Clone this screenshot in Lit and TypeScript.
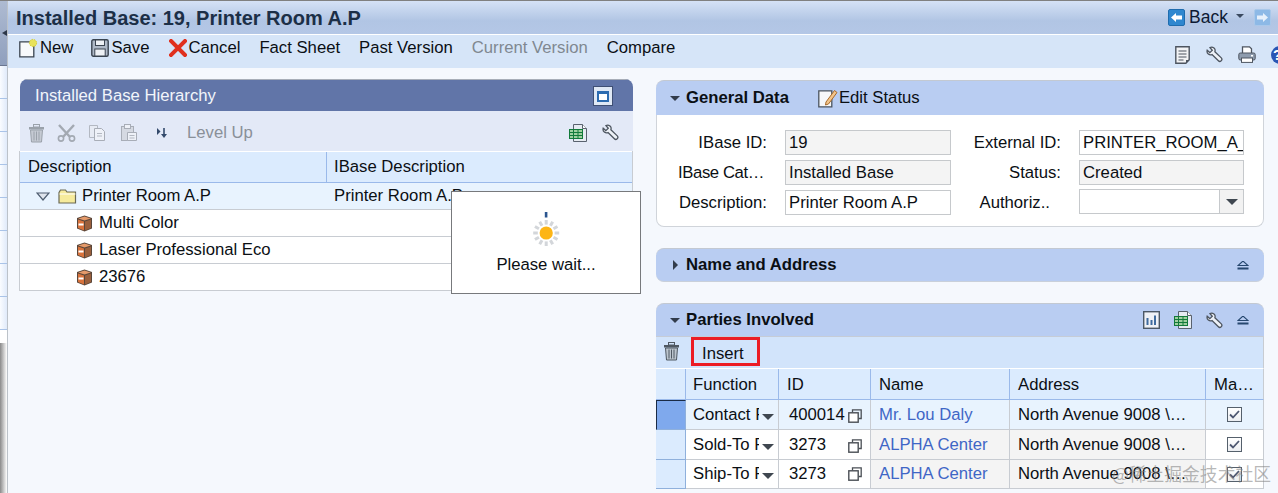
import { LitElement, html, css, svg } from "lit";
import { customElement } from "lit/decorators.js";

const ic = (w: number, h: number, body: unknown, cls = "") =>
  html`<svg class="ic ${cls}" width=${w} height=${h} viewBox="0 0 ${w} ${h}">${body}</svg>`;

const trash = (c = "#4f5862", f = "#bcc5ce") => ic(17, 19, svg`
  <rect x="5.5" y="0.5" width="6" height="2.5" fill="none" stroke=${c}/>
  <rect x="1" y="3" width="15" height="2.5" fill=${c}/>
  <path d="M2.5 6h12l-1 12h-10z" fill=${f} stroke=${c}/>
  <path d="M6 7.5v9M8.5 7.5v9M11 7.5v9" stroke=${c}/>`);
const scissors = () => ic(19, 18, svg`
  <path d="M2 1l11 12M17 1L6 13" stroke="#a3a9b2" stroke-width="2.4" fill="none"/>
  <circle cx="4" cy="14.5" r="2.6" fill="none" stroke="#a3a9b2" stroke-width="1.6"/>
  <circle cx="15" cy="14.5" r="2.6" fill="none" stroke="#a3a9b2" stroke-width="1.6"/>`);
const paste = () => ic(18, 18, svg`
  <rect x="1.5" y="2.5" width="12" height="14" fill="#d5d9e2" stroke="#a8adb7"/>
  <rect x="4.5" y="0.5" width="6" height="4" fill="#eef1f8" stroke="#a8adb7"/>
  <path d="M7.5 8.5h9v8h-9z" fill="#eef1f8" stroke="#a8adb7"/>
  <path d="M9.5 11.5h5M9.5 14h5" stroke="#b3b8c2"/>`);
const level = () => ic(12, 12, svg`
  <path d="M1 1l3.5 3.5L1 8z" fill="#33496b"/>
  <path d="M8 1v7" stroke="#33496b" stroke-width="1.6"/>
  <path d="M5 7h6l-3 4z" fill="#33496b"/>`);
const excel = () => ic(18, 18, svg`
  <path d="M4.5 0.5h9l4 4v13h-13z" fill="#e6ebf2" stroke="#59626f"/>
  <path d="M13.5 0.5v4h4" fill="#fff" stroke="#59626f"/>
  <rect x="0.5" y="5.5" width="13" height="9" fill="#9fcf9f" stroke="#127a3a"/>
  <path d="M0.5 8.5h13M0.5 11.5h13M4.5 5.5v9M9 5.5v9" stroke="#127a3a"/>`);
const wrench = () => ic(17, 17, svg`
  <path d="M1.2 4.2 3.8 6.6 6.3 4.2 4 1.6C5.8.6 8 1.2 8.8 3.1c.4 1 .4 1.8.1 2.7l6.4 6.1c.9 1 .6 2.2-.1 2.9-.8.7-2 .8-2.8-.1L6 8.6C3.5 9.4 .3 7.6 1.2 4.2z" fill="#eef2f8" stroke="#4d5560" stroke-width="1.3"/>`);
const note = () => ic(15, 18, svg`
  <path d="M.8.8h13.4v13l-3.4 3.4H.8z" fill="#f2f3f5" stroke="#4d5560" stroke-width="1.4"/>
  <path d="M3.5 5h8M3.5 8h8M3.5 11h8M3.5 14h5" stroke="#4d5560" stroke-width="1.2"/>
  <path d="M14.5 14l-3.5 3.5V14z" fill="#4d5560"/>`);
const printer = () => ic(18, 17, svg`
  <path d="M4.5.8h7l2 2v5h-9z" fill="#fff" stroke="#4d5560" stroke-width="1.3"/>
  <rect x=".8" y="7" width="16.4" height="7" rx="1.5" fill="#8e9cae" stroke="#4d5560"/>
  <rect x="3.5" y="12" width="11" height="4.4" fill="#fff" stroke="#4d5560"/>
  <rect x="13" y="9" width="2" height="1.5" fill="#fff"/>`);
const chart = () => ic(17, 18, svg`
  <rect x=".7" y=".7" width="15.6" height="16.6" fill="#eef1f6" stroke="#4b5866" stroke-width="1.4"/>
  <path d="M4.5 7v7M8.5 9v5M12 4.5v9.5" stroke="#3f6b9e" stroke-width="2"/>`);
const collapse = () => ic(12, 9, svg`
  <path d="M6 0 11 4.5H1z" fill="none" stroke="#26476f" stroke-width="1.1"/>
  <rect x="0.5" y="6.5" width="11" height="2" fill="#26476f"/>`);
const cube = () => ic(17, 17, svg`
  <path d="M8.5 .5 16 3v10.5L8.5 16.5 1 13.5V3z" fill="#59463a"/>
  <path d="M8.5 1.6 14.8 3.5 8.5 5.6 2.2 3.5z" fill="#e59a6a"/>
  <path d="M2 4.6 8 6.6v8.8l-6-2.4z" fill="#d9733c"/>
  <path d="M9 6.6 15 4.6v8.4l-6 2.4z" fill="#9a5f3c"/>
  <rect x="2.5" y="8.5" width="5" height="2" fill="#fff"/>`);
const stack = () => ic(14, 14, svg`
  <path d="M4.5 3.5V.8h8.7v8.7h-2.7" fill="none" stroke="#4a4f55" stroke-width="1.3"/>
  <rect x=".8" y="3.8" width="9.4" height="9.4" fill="#fff" stroke="#4a4f55" stroke-width="1.4"/>`);

const parties = [
  { fn: "Contact P", id: "400014", name: "Mr. Lou Daly", sel: true },
  { fn: "Sold-To P", id: "3273", name: "ALPHA Center", sel: false },
  { fn: "Ship-To P", id: "3273", name: "ALPHA Center", sel: false },
];
const sideTabs = Array.from({ length: 8 });

@customElement("app-root")
export class AppRoot extends LitElement {
  static styles = css`
    :host { display: block; position: relative; width: 1278px; height: 493px; overflow: hidden;
      font: 16.7px/1.2 "Liberation Sans", Arial, sans-serif; color: #0b0f14; background: #f5f8fd; }
    * { box-sizing: border-box; }
    .ic { display: block; flex: none; }
    .shell { display: grid; grid-template-columns: 8px 1fr; height: 493px; border-top: 1px solid #808080; }
    .side { border-right: 1px solid #bcc2c9; background: #fff; display: flex; flex-direction: column; min-height: 0; overflow: hidden; }
    .side-top { height: 65px; flex: none; background: linear-gradient(#aebbd2, #8f9fbd); border-bottom: 1px solid #6a7690; display: flex; align-items: center; justify-content: flex-end; }
    .side-top i { display:block; width:0; height:0; border:3px solid transparent; border-right:5px solid #2d3748; }
    .side-tab { height: 33px; flex: none; background: linear-gradient(90deg, #fafcff, #e0eafa); border-bottom: 1px solid #a9c3e8; }
    .side-gap { height: 13px; flex: none; }
    .side-shadow { flex: 1; background: linear-gradient(90deg, #8a8a8a, #dddddd 70%, #fff); }
    .main { display: flex; flex-direction: column; min-width: 0; }
    .title { height: 33px; flex: none; display: flex; align-items: center; padding: 0 7px 0 8px;
      background: linear-gradient(#d5e2f6, #b1c5e4 60%, #b4c7e6); }
    .title h1 { margin: 0; font-size: 20px; font-weight: 700; color: #1c2f47; flex: 1; white-space: nowrap; }
    .back { display: flex; align-items: center; gap: 4px; font-size: 17.5px; color: #0d1a33; }
    .navbtn { width: 17px; height: 17px; border-radius: 2px; background: #2f87cf; border: 1px solid #1f6cae; display: flex; align-items: center; justify-content: center; }
    .navbtn.off { background: #8db9e6; border-color: #a9c8ea; }
    .tri { width: 0; height: 0; border: 4px solid transparent; border-top: 4px solid #3a4a60; border-bottom: 0; margin: 0 6px 3px 4px; }
    .tools { height: 34px; flex: none; border-top: 1px solid #fff; background: #d6e5f8; display: flex; align-items: center; padding: 0 0 7px 11px; white-space: nowrap; }
    .tools .b { display: flex; align-items: center; gap: 1px; }
    .tools .b.t { margin-left: 19px; }
    .tools .off { color: #808890; }
    .tools .right { margin-left: auto; display: flex; align-items: center; gap: 15px; padding-top: 13px; margin-right: -7px; height: 0; }
    .tools .right .ic:first-child { margin-right: 1px; }
    .help { width: 14px; height: 18px; border-radius: 9px 0 0 9px; background: #2a56b4; color: #fff; font-weight: 700; font-size: 14px; line-height: 18px; padding-left: 2px; overflow: hidden; }
    .content { flex: 1; display: grid; grid-template-columns: 613px 608px; column-gap: 23px; padding: 11px 0 0 12px; align-items: start; min-height: 0; }
    .pane-l { border-radius: 8px 8px 0 0; overflow: hidden; }
    .pane-h { height: 32px; background: #6175a8; color: #f2f5fb; display: flex; align-items: center; justify-content: space-between; padding: 1px 20px 0 15px; border-top: 1px solid #a8aeb8; }
    .maxi { width: 20px; height: 20px; background: #dfe8f5; border: 2px solid #dfe8f5; outline: 1px solid #3f4f74; outline-offset: -1px; padding: 3px 2px 2px; margin-top: -1px; }
    .maxi b { display: block; height: 100%; background: #fff; border: 2px solid #2c6bb0; border-top-width: 3px; }
    .pane-t { height: 40px; background: #e3e9f7; display: flex; align-items: center; padding: 4px 0 0 8px; color: #8a9099; }
    .pane-t .ic { margin-right: 12px; }
    .pane-t .ic.wide { margin-right: 14px; }
    .pane-t .lvl { margin-left: 6px; margin-right: 4px; }
    .pane-t .lu { margin-left: 3px; }
    .pane-t .end { margin-left: auto; display: flex; gap: 9px; padding-right: 8px; }
    .pane-t .end .ic { margin: 0 6px 0 0; }
    .tree { border: 1px solid #c8ccd2; border-top: 0; background: #fff; margin-left: -1px; }
    .th { display: grid; grid-template-columns: 307px 1fr; height: 32px; background: #dbebfe; border-top: 1px solid #fff; border-bottom: 1px solid #9ab9ea; align-items: stretch; }
    .th > div { display: flex; align-items: center; padding-left: 7px; }
    .th > div:first-child { border-right: 1px solid #9ab9ea; padding-left: 8px; }
    .tr { display: grid; grid-template-columns: 307px 1fr; height: 27px; border-bottom: 1px solid #c8ccd2; align-items: center; }
    .tr:last-child { border-bottom: 0; height: 26px; }
    .tr.root { background: #e8f3fe; padding-top: 1px; }
    .tr .c { display: flex; align-items: center; gap: 6px; padding-left: 56px; }
    .tr.root .c { padding-left: 16px; gap: 5px; }
    .tr.root .c .ic:first-child { margin-right: 3px; }
    .tr .d { padding-left: 7px; white-space: nowrap; }
    .right-col { display: flex; flex-direction: column; padding-top: 1px; }
    .sec-h { height: 35px; background: #b9cdf2; border-top: 1px solid #c3c9d2; border-radius: 8px 8px 0 0; display: flex; align-items: center; padding: 0 15px 0 14px; font-weight: 700; }
    .sec-h.closed { border-radius: 8px; border-bottom: 1px solid #c9d0da; height: 34px; margin-top: 21px; }
    .sec-h .grow { flex: 1; }
    .caret { width: 0; height: 0; border: 5px solid transparent; border-top: 5px solid #323c4c; border-bottom: 0; margin-right: 6px; }
    .caret-r { width: 0; height: 0; border: 5px solid transparent; border-left: 5px solid #323c4c; border-right: 0; margin: 0 8px 0 3px; }
    .edit { display: flex; align-items: center; gap: 1px; font-weight: 400; margin-left: 29px; }
    .body { height: 112px; background: #fff; border: 1px solid #d0d4da; border-top: 0; border-radius: 0 0 8px 8px; display: grid; grid-template-columns: 128px 166px 128px 165px; grid-auto-rows: 30px; padding-top: 15px; white-space: nowrap; }
    .lab { text-align: right; padding-right: 18px; height: 25px; line-height: 25px; }
    .lab.t1 { padding-right: 21px; letter-spacing: -.4px; }
    .lab.t2 { padding-right: 29px; }
    .inp { height: 25px; border: 1px solid #c6c9cc; padding: 0 3px; line-height: 24px; background: #fff; overflow: hidden; }
    .inp.ro { background: #f4f4f4; }
    .combo { display: flex; justify-content: flex-end; margin-top: -1px; padding: 0; }
    .combo span { width: 24px; background: #f2f2f2; border-left: 1px solid #c6c9cc; display: flex; align-items: center; justify-content: center; }
    .combo span::after { content: ""; border: 6px solid transparent; border-top: 6px solid #3f4750; border-bottom: 0; }
    .sec-h.p { margin-top: 21px; height: 34px; border-bottom: 1px solid #c6ccd6; }
    .sec-h.p .ic { margin-left: 14px; }
    .sec-h.p .ic:first-of-type { margin-left: 0; }
    .sec-tb { height: 32px; background: #d2e4fb; display: flex; align-items: center; padding: 0 0 2px 7px; gap: 11px; border-bottom: 1px solid #fff; border-right: 1px solid #c8ccd2; }
    .insert { width: 69px; height: 29px; border: 3px solid #ec1c24; padding-left: 8px; line-height: 27px; }
    table { border-collapse: separate; border-spacing: 0; table-layout: fixed; width: 608px; font-size: 16.7px; }
    th, td { padding: 0 0 0 8px; font-weight: 400; text-align: left; white-space: nowrap; overflow: hidden; }
    th { height: 31px; padding-top: 2px; background: #dbebfe; border-right: 1px solid #9ab9ea; border-bottom: 1px solid #9ab9ea; }
    td { height: 30px; padding-top: 2px; border-right: 1px solid #c8ccd2; border-bottom: 1px solid #c8ccd2; background: #fff; }
    tr:last-child td { height: 29px; padding-top: 0; }
    th:last-child, td:last-child { border-right: 1px solid #c8ccd2; }
    tr.sel td { background: #e8f3fe; }
    td.ro { background: #f4f4f4; }
    td.s { background: #dbebfe; border-right: 1px solid #8fb0dc; border-bottom: 1px solid #8fb0dc; padding: 0; }
    tr.sel td.s { background: #7fa9ed; border-left: 1px solid #1a2b45; border-top: 1px solid #1a2b45; }
    td.f, th.f { padding-left: 7px; }
    .fn { display: flex; align-items: center; justify-content: space-between; padding-right: 4px; }
    .fn em { font-style: normal; width: 66px; overflow: hidden; white-space: nowrap; display: block; }
    .fn i { display: block; border: 6px solid transparent; border-top: 6px solid #3f4750; border-bottom: 0; margin-top: 3px; }
    .idc { display: flex; align-items: center; justify-content: space-between; padding: 0 8px 0 2px; }
    .link { color: #3f66c6; }
    td.m { padding: 0; }
    .chk { margin: 0 auto; width: 15px; height: 15px; border: 1px solid #55606c; background: linear-gradient(#fff, #eceef2); display: flex; align-items: center; justify-content: center; }
    .popup { position: absolute; left: 451px; top: 191px; width: 190px; height: 103px; background: #fff; border: 1px solid #77797c; display: flex; flex-direction: column; align-items: center; padding-top: 20px; gap: 9px; }
    .wm { position: absolute; right: 7px; bottom: 7px; font: 17.8px "Noto Sans CJK SC", "Liberation Sans", sans-serif; color: rgba(130,130,130,.58); white-space: nowrap; }
  `;

  private spinner() {
    const ticks = Array.from({ length: 12 }, (_, i) => i * 30);
    return ic(30, 34, svg`
      ${ticks.map((a) => svg`<rect x="13.7" y="8" width="3" height="4.6" fill="#d3d6da" transform="rotate(${a} 15.2 21)"/>`)}
      <rect x="13.8" y="0" width="2.6" height="5.5" fill="#2a558f"/>
      <circle cx="15.2" cy="21" r="6.6" fill="#fdb515"/>`);
  }

  render() {
    return html`
      <div class="shell">
        <div class="side">
          <div class="side-top"><i></i></div>
          ${sideTabs.map(() => html`<div class="side-tab"></div>`)}
          <div class="side-gap"></div>
          <div class="side-shadow"></div>
        </div>
        <div class="main">
          <div class="title">
            <h1>Installed Base: 19, Printer Room A.P</h1>
            <div class="back">
              <span class="navbtn">${ic(11, 11, svg`<path d="M0 5.5 5 1v2.5h6v4H5V10z" fill="#fff"/>`)}</span>
              Back
              <span class="tri"></span>
              <span class="navbtn off">${ic(11, 11, svg`<path d="M11 5.5 6 1v2.5H0v4h6V10z" fill="#e6f0fb"/>`)}</span>
            </div>
          </div>
          <div class="tools">
            <span class="b">${ic(20, 20, svg`
              <path d="M.8 3.8h11l3 3v12H.8z" fill="#f8f9fb" stroke="#3b4450" stroke-width="1.3"/>
              <circle cx="14" cy="5" r="3.6" fill="#e8e25c" stroke="#d4cc30" stroke-dasharray="1.5 1"/>`)}New</span>
            <span class="b" style="margin-left:18px">${ic(19, 19, svg`
              <rect x=".8" y=".8" width="16.4" height="16.4" rx="1.5" fill="#aeb8c6" stroke="#3b4450" stroke-width="1.4"/>
              <rect x="4.5" y="1" width="9" height="5.5" fill="#eef1f5" stroke="#3b4450"/>
              <rect x="3.8" y="10" width="10.4" height="7" fill="#eef1f5" stroke="#3b4450"/>`)}Save</span>
            <span class="b" style="margin-left:20px">${ic(18, 18, svg`
              <path d="M2 2 16 16M16 2 2 16" stroke="#e0301e" stroke-width="4" stroke-linecap="square"/>`)}Cancel</span>
            <span class="b t">Fact Sheet</span>
            <span class="b t">Past Version</span>
            <span class="b t off">Current Version</span>
            <span class="b t">Compare</span>
            <span class="right">${note()}${wrench()}${printer()}<span class="help">?</span></span>
          </div>
          <div class="content">
            <div>
              <div class="pane-l">
                <div class="pane-h">Installed Base Hierarchy<span class="maxi"><b></b></span></div>
                <div class="pane-t">
                  ${trash("#9aa1aa", "#c5cad3")}${scissors()}${ic(18, 18, svg`
                    <path d="M1.5 1.5h8v12h-8z" fill="#e7ebf4" stroke="#b3b8c2"/>
                    <path d="M6.5 4.5h7l3 3v9h-10z" fill="#eef1f8" stroke="#a8adb7"/>
                    <path d="M9 9.5h5M9 12h5" stroke="#b3b8c2"/>`, "wide")}${paste()}
                  <span class="lvl">${level()}</span>
                  <span class="lu">Level Up</span>
                  <span class="end">${excel()}${wrench()}</span>
                </div>
              </div>
              <div class="tree">
                <div class="th"><div>Description</div><div>IBase Description</div></div>
                <div class="tr root">
                  <div class="c">${ic(14, 9, svg`<path d="M1 1h12L7 8z" fill="#dfe4ec" stroke="#4e5d70" stroke-width="1.2"/>`)}
                    ${ic(19, 15, svg`<path d="M1 3.5 2.5 1h5L9 3h8.5v11H1z" fill="#f6eb9c" stroke="#6b6a55" stroke-width="1.2"/><path d="M1.5 5h16" stroke="#fff"/>`)}
                    Printer Room A.P</div>
                  <div class="d">Printer Room A.P</div>
                </div>
                ${["Multi Color", "Laser Professional Eco", "23676"].map((t) => html`
                  <div class="tr"><div class="c">${cube()}${t}</div><div></div></div>`)}
              </div>
            </div>
            <div class="right-col">
              <div class="sec-h"><span class="caret"></span>General Data
                <span class="edit">${ic(20, 19, svg`
                  <path d="M.8 1.8h13v16H.8z" fill="#f6f7f9" stroke="#4a535e" stroke-width="1.3"/>
                  <path d="M8 13 16.5 1.5l2.5 2L10.5 15 7.5 16z" fill="#f2c48a" stroke="#a86a2a"/>`)}Edit Status</span>
              </div>
              <div class="body">
                <div class="lab">IBase ID:</div><div class="inp ro">19</div>
                <div class="lab">External ID:</div><div class="inp">PRINTER_ROOM_A_</div>
                <div class="lab t1">IBase Cat…</div><div class="inp ro">Installed Base</div>
                <div class="lab">Status:</div><div class="inp ro">Created</div>
                <div class="lab">Description:</div><div class="inp">Printer Room A.P</div>
                <div class="lab t2">Authoriz..</div><div class="inp combo"><span></span></div>
              </div>
              <div class="sec-h closed"><span class="caret-r"></span>Name and Address<span class="grow"></span>${collapse()}</div>
              <div class="sec-h p"><span class="caret"></span>Parties Involved<span class="grow"></span>
                ${chart()}${excel()}${wrench()}${collapse()}
              </div>
              <div class="sec-tb">${trash()}<span class="insert">Insert</span></div>
              <table>
                <colgroup><col style="width:30px"/><col style="width:93px"/><col style="width:92px"/><col style="width:139px"/><col style="width:196px"/><col/></colgroup>
                <thead><tr><th></th><th class="f">Function</th><th>ID</th><th>Name</th><th>Address</th><th>Ma…</th></tr></thead>
                <tbody>
                  ${parties.map((p) => html`
                    <tr class=${p.sel ? "sel" : ""}>
                      <td class="s"></td>
                      <td class="f"><div class="fn"><em>${p.fn}</em><i></i></div></td>
                      <td><div class="idc"><span>${p.id}</span>${stack()}</div></td>
                      <td class="ro"><span class="link">${p.name}</span></td>
                      <td class="ro">North Avenue 9008 \\…</td>
                      <td class="m"><div class="chk">${ic(11, 9, svg`<path d="M1 4.5 4 7.5 10 1" fill="none" stroke="#4c5670" stroke-width="1.8"/>`)}</div></td>
                    </tr>`)}
                </tbody>
              </table>
            </div>
          </div>
        </div>
      </div>
      <div class="popup">${this.spinner()}<span>Please wait...</span></div>
      <div class="wm">@稀土掘金技术社区</div>
    `;
  }
}
